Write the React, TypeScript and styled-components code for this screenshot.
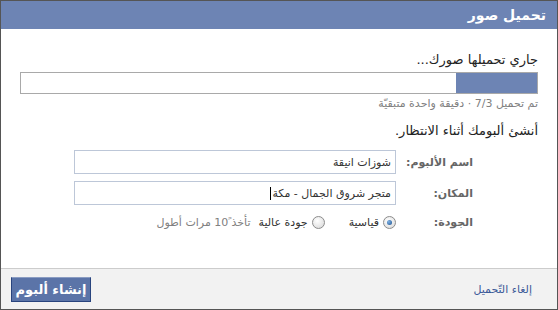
import styled, { createGlobalStyle } from 'styled-components'

const GlobalStyle = createGlobalStyle`
  html, body {
    margin: 0;
    padding: 0;
    background: #fff;
  }
  body {
    font-family: "DejaVu Sans", Tahoma, sans-serif;
  }
`

const Dialog = styled.div`
  direction: rtl;
  width: 558px;
  height: 310px;
  box-sizing: border-box;
  border: 1px solid #555;
  display: flex;
  flex-direction: column;
  background: #fff;
`

const Header = styled.div`
  height: 28px;
  background: #6d84b4;
  color: #fff;
  font-size: 14px;
  font-weight: bold;
  display: flex;
  align-items: center;
  padding: 0 11px;
  flex-shrink: 0;
`

const Body = styled.div`
  flex: 1;
  padding: 23px 19px 0;
`

const Heading = styled.div`
  font-size: 13px;
  line-height: 16px;
  color: #222;
`

// the bar fills from the right, as the page is rtl
const Progress = styled.div`
  margin-top: 4px;
  height: 20px;
  border: 1px solid #a9a9a9;
  background: #fff;
`

const ProgressFill = styled.div`
  background: #6d84b4;
  height: 100%;
  margin-right: 0;
  margin-left: auto;
  float: right;
`

const Status = styled.div`
  margin-top: 3px;
  font-size: 11px;
  line-height: 14px;
  color: #808080;
`

const Prompt = styled.div`
  margin-top: 12px;
  font-size: 13px;
  line-height: 16px;
  color: #222;
`

const Form = styled.div`
  margin-top: 11px;
  padding-right: 65px;
  display: flex;
  flex-direction: column;
  gap: 7px;
`

const Row = styled.div<{ $top?: number }>`
  display: flex;
  align-items: center;
  margin-top: ${(p) => p.$top ?? 0}px;
`

const Label = styled.div`
  width: 72px;
  margin-left: 5px;
  font-size: 11px;
  font-weight: bold;
  color: #666;
`

const Field = styled.div`
  width: 322px;
  height: 24px;
  box-sizing: border-box;
  border: 1px solid #bdc7d8;
  font-size: 11px;
  color: #333;
  display: flex;
  align-items: center;
  padding: 0 4px;
`

const Caret = styled.span`
  display: inline-block;
  width: 1px;
  height: 13px;
  background: #000;
  margin-right: 1px;
`

const Choice = styled.label<{ $gap?: number }>`
  display: flex;
  align-items: center;
  gap: 4px;
  font-size: 11px;
  color: #333;
  margin-left: ${(p) => p.$gap ?? 0}px;
`

const Radio = styled.span<{ $on?: boolean }>`
  width: 11px;
  height: 11px;
  border-radius: 50%;
  border: 1px solid #8c8c8c;
  background: radial-gradient(circle at 40% 35%, #fff, #d6d6d6);
  display: flex;
  align-items: center;
  justify-content: center;
  &::after {
    content: '';
    display: ${(p) => (p.$on ? 'block' : 'none')};
    width: 5px;
    height: 5px;
    border-radius: 50%;
    background: radial-gradient(circle at 35% 35%, #7fb3e6, #1b4f8c);
  }
`

const Hint = styled.span`
  color: #808080;
  margin-right: 4px;
`

const Footer = styled.div`
  height: 40px;
  flex-shrink: 0;
  background: #f2f2f2;
  border-top: 1px solid #ccc;
  display: flex;
  align-items: center;
  justify-content: space-between;
  padding: 0 25px 0 10px;
`

const Link = styled.a`
  color: #3b5998;
  font-size: 11px;
  text-decoration: none;
`

const Button = styled.button`
  width: 80px;
  height: 25px;
  box-sizing: border-box;
  background: #5b74a8;
  border: 1px solid #29447e;
  border-top-color: #8a9cc2;
  color: #fff;
  font-family: inherit;
  font-size: 13px;
  font-weight: bold;
  padding: 0;
`

export default function App() {
  const done = 3
  const total = 19
  return (
    <>
      <GlobalStyle />
      <Dialog>
        <Header>تحميل صور</Header>
        <Body>
          <Heading>جاري تحميلها صورك...</Heading>
          <Progress>
            <ProgressFill style={{ width: `${(done / total) * 100}%` }} />
          </Progress>
          <Status>تم تحميل 7/3 · دقيقة واحدة متبقيّة</Status>
          <Prompt>أنشئ ألبومك أثناء الانتظار.</Prompt>
          <Form>
            <Row>
              <Label>اسم الألبوم:</Label>
              <Field>شوزات انيقة</Field>
            </Row>
            <Row>
              <Label>المكان:</Label>
              <Field>
                متجر شروق الجمال - مكة
                <Caret />
              </Field>
            </Row>
            <Row $top={4}>
              <Label>الجودة:</Label>
              <Choice $gap={24}>
                <Radio $on />
                قياسية
              </Choice>
              <Choice>
                <Radio />
                جودة عالية
                <Hint>تأخذ ً10 مرات أطول</Hint>
              </Choice>
            </Row>
          </Form>
        </Body>
        <Footer>
          <Link href="#">إلغاء التّحميل</Link>
          <Button>إنشاء ألبوم</Button>
        </Footer>
      </Dialog>
    </>
  )
}
